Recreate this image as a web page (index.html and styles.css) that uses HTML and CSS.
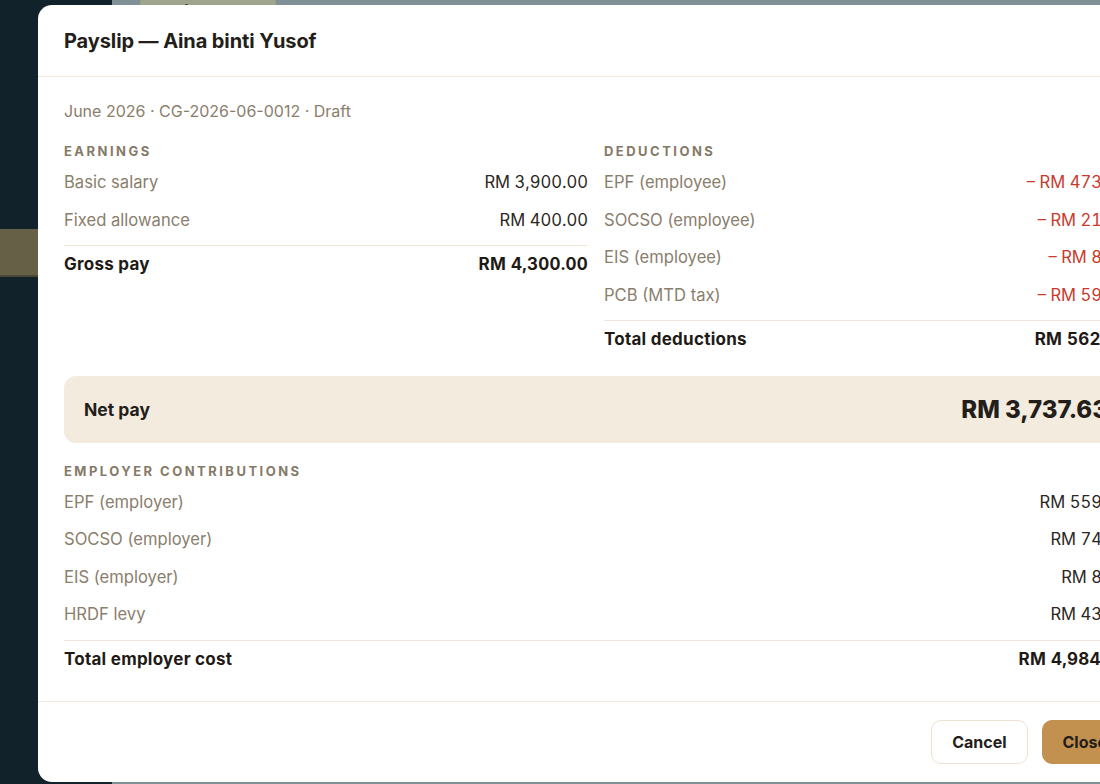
FILE: index.html
```html
<!DOCTYPE html>
<html lang="en">

<head>
    <meta charset="UTF-8">
    <meta name="viewport" content="width=device-width, initial-scale=1.0">
    <title>Payslip — Aina binti Yusof</title>
    <link rel="stylesheet" href="styles.css">
</head>

<body>

    <div class="app">
        <aside class="sidebar">
            <nav class="nav">
                <a class="nav-item active">Payroll</a>
                <a class="nav-item">People</a>
            </nav>
        </aside>
        <main class="main">
            <div class="topbar">
                <span class="org-chip">Caliph Group</span>
            </div>
        </main>
    </div>

    <div class="modal">
        <header class="modal-head">
            <h2 class="modal-title">Payslip — Aina binti Yusof</h2>
        </header>

        <div class="modal-body">
            <p class="meta">June 2026 · CG-2026-06-0012 · Draft</p>

            <div class="cols">
                <section class="group">
                    <div class="group-label">Earnings</div>
                    <div class="row"><span>Basic salary</span><span class="amt">RM 3,900.00</span></div>
                    <div class="row"><span>Fixed allowance</span><span class="amt">RM 400.00</span></div>
                    <div class="row total"><span>Gross pay</span><span class="amt">RM 4,300.00</span></div>
                </section>

                <section class="group">
                    <div class="group-label">Deductions</div>
                    <div class="row"><span>EPF (employee)</span><span class="amt neg">– RM 473.00</span></div>
                    <div class="row"><span>SOCSO (employee)</span><span class="amt neg">– RM 21.25</span></div>
                    <div class="row"><span>EIS (employee)</span><span class="amt neg">– RM 8.50</span></div>
                    <div class="row"><span>PCB (MTD tax)</span><span class="amt neg">– RM 59.62</span></div>
                    <div class="row total"><span>Total deductions</span><span class="amt">RM 562.37</span></div>
                </section>
            </div>

            <div class="net">
                <span class="net-label">Net pay</span>
                <span class="net-amt">RM 3,737.63</span>
            </div>

            <section class="group employer">
                <div class="group-label">Employer contributions</div>
                <div class="row"><span>EPF (employer)</span><span class="amt">RM 559.00</span></div>
                <div class="row"><span>SOCSO (employer)</span><span class="amt">RM 74.35</span></div>
                <div class="row"><span>EIS (employer)</span><span class="amt">RM 8.50</span></div>
                <div class="row"><span>HRDF levy</span><span class="amt">RM 43.00</span></div>
                <div class="row total"><span>Total employer cost</span><span class="amt">RM 4,984.85</span></div>
            </section>
        </div>

        <footer class="modal-foot">
            <button class="btn btn-ghost">Cancel</button>
            <button class="btn btn-primary">Close</button>
        </footer>
    </div>

</body>

</html>
```

FILE: styles.css
```css
* {
    margin: 0;
    padding: 0;
    box-sizing: border-box;
}

html,
body {
    height: 100%;
}

body {
    overflow: hidden;
    font-family: Inter, "Noto Sans", sans-serif;
    color: #231e19;
}

/* page behind the dialog, already dimmed by the backdrop */
.app {
    display: flex;
    height: 100vh;
}

.sidebar {
    width: 112px;
    background: #11222a;
}

.nav {
    display: flex;
    flex-direction: column;
    padding-top: 229px;
}

.nav-item {
    height: 48px;
    color: transparent;
    font-size: 14px;
}

.nav-item.active {
    background: #666046;
    border-bottom: 2px solid #4d4835;
}

.main {
    flex: 1;
    background: #7f9194;
}

.topbar {
    padding-left: 28px;
}

.org-chip {
    display: inline-block;
    margin-top: -22px;
    padding: 4px 21px;
    border-radius: 6px;
    background: #9fa48d;
    color: #1c1f1c;
    font-size: 15px;
    font-weight: 600;
    line-height: 19px;
}

/* dialog */
.modal {
    position: absolute;
    top: 5px;
    left: 38px;
    width: 1116px;
    height: 777px;
    background: #fff;
    border-radius: 14px;
    overflow: hidden;
    display: flex;
    flex-direction: column;
}

.modal-head {
    height: 72px;
    padding: 0 26px;
    display: flex;
    align-items: center;
    border-bottom: 1px solid #f1e7da;
}

.modal-title {
    font-size: 20px;
    font-weight: 700;
    letter-spacing: -0.1px;
    color: #231e19;
}

.modal-body {
    padding: 23px 26px 23px;
}

.meta {
    font-size: 16px;
    line-height: 22px;
    color: #8a7e6c;
    margin-bottom: 21px;
}

.cols {
    display: grid;
    grid-template-columns: 1fr 1fr;
    gap: 16px;
}

.group-label {
    font-size: 13px;
    line-height: 16px;
    font-weight: 700;
    letter-spacing: 0.19em;
    text-transform: uppercase;
    color: #857a67;
    margin-bottom: 5px;
}

.row {
    display: flex;
    justify-content: space-between;
    padding: 8px 0;
    font-size: 16.6px;
    line-height: 21.5px;
    color: #8a7e6c;
}

.row .amt {
    color: #2b2621;
    font-variant-numeric: tabular-nums;
}

.row .neg {
    color: #c83a2c;
}

.row.total {
    margin-top: 6px;
    border-top: 1px solid #efe6d8;
    font-size: 17px;
    font-weight: 700;
    letter-spacing: 0.25px;
    color: #1f1a15;
}

.row.total .amt {
    color: #1f1a15;
}

.net {
    margin-top: 17px;
    height: 67px;
    padding: 0 20px;
    display: flex;
    align-items: center;
    justify-content: space-between;
    background: #f4ebdf;
    border-radius: 12px;
}

.net-label {
    font-size: 17.5px;
    font-weight: 700;
    color: #231e19;
}

.net-amt {
    font-size: 24px;
    font-weight: 800;
    color: #231e19;
}

.employer {
    margin-top: 20px;
}

.modal-foot {
    border-top: 1px solid #f1e7da;
    padding: 18px 26px;
    display: flex;
    justify-content: flex-end;
    gap: 14px;
}

.btn {
    height: 44px;
    padding: 0 20px;
    border-radius: 10px;
    font-family: inherit;
    font-size: 16px;
    font-weight: 700;
    color: #231e19;
    cursor: pointer;
}

.btn-ghost {
    background: #fff;
    border: 1px solid #ede2d2;
}

.btn-primary {
    background: #c2914f;
    border: 1px solid #c2914f;
}
```
